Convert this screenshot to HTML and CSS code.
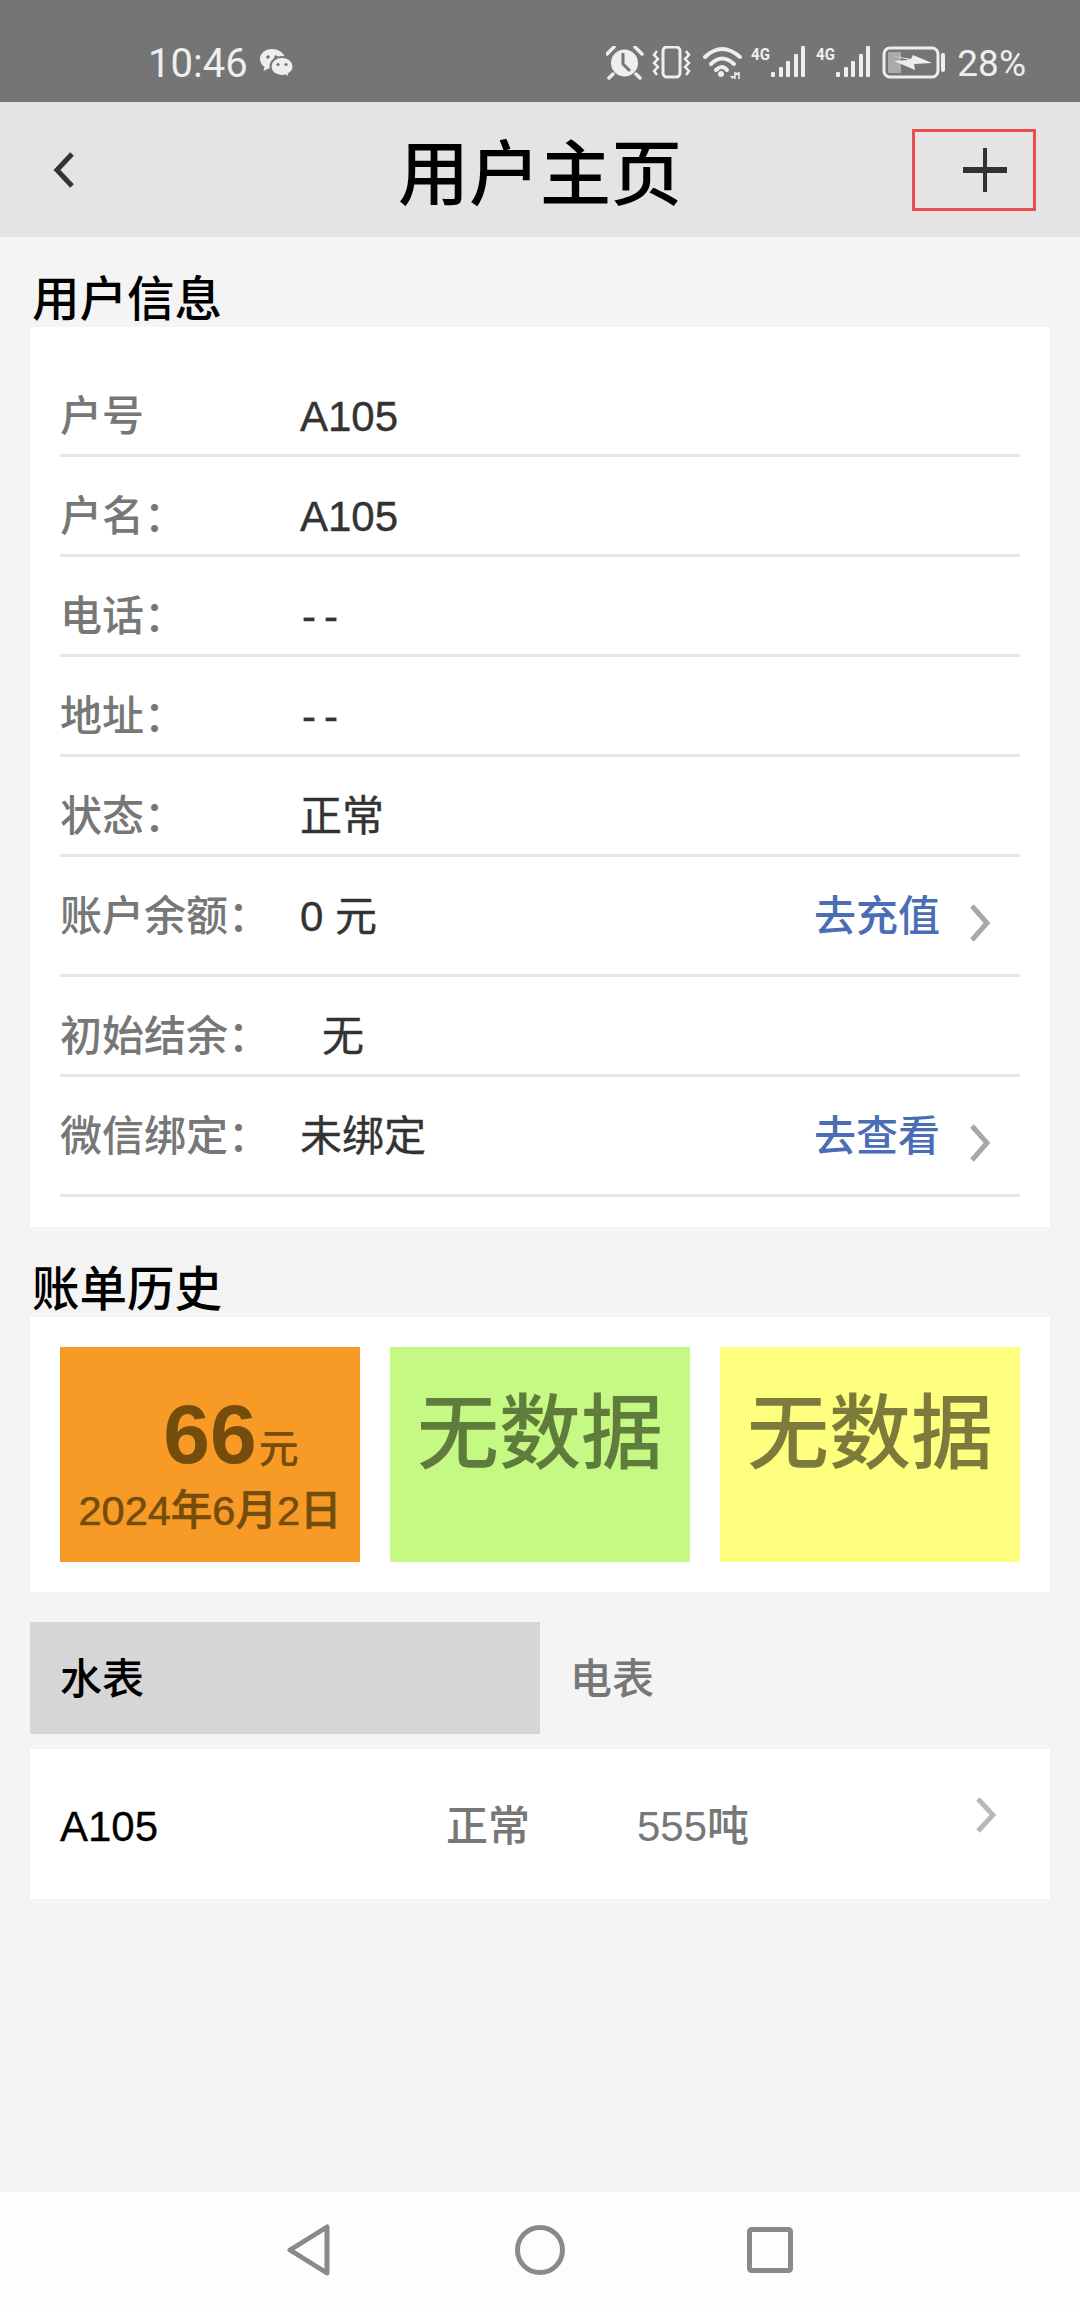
FILE: index.html

```html
<!DOCTYPE html>
<html lang="zh-CN">
<head>
    <meta charset="UTF-8">
    <meta name="viewport" content="width=device-width, initial-scale=1.0">
    <title>用户主页</title>
    <link rel="stylesheet" href="styles.css">
</head>
<body>
    <div class="statusbar">
        <span class="time">10:46</span>
        <svg class="wechat" width="36" height="30" viewBox="0 0 36 30">
            <path d="M13 1C6 1 1 5.500 1 11c0 3.500 2 6 4.500 8l-1 4 5-2.500c1.500.5 3 .5 4.500.5 7 0 12-4.500 12-10S20 1 13 1z" fill="#eee"/>
            <circle cx="9" cy="9" r="1.800" fill="#757575"/>
            <circle cx="17" cy="9" r="1.800" fill="#757575"/>
            <path d="M23 9c-6.500 0-11.500 4-11.500 9.500S16.500 28 23 28c1.300 0 2.500-.2 3.500-.5l4 2.300-.8-3.800c2.800-1.700 4.800-4.500 4.800-7.500C34.500 13 29.500 9 23 9z" fill="#eee" stroke="#757575" stroke-width="2"/>
            <circle cx="19" cy="16.500" r="1.600" fill="#757575"/>
            <circle cx="27" cy="16.500" r="1.600" fill="#757575"/>
        </svg>
        <svg class="status-icons" width="340" height="34" viewBox="0 0 340 34">
            <!-- alarm -->
            <circle cx="18.500" cy="17" r="13.500" fill="#eee"/>
            <path d="M17 7v11l7 7" fill="none" stroke="#757575" stroke-width="3"/>
            <path d="M1 8l7-7M29 1l7 7M7 28l-4 4M30 28l4 4" stroke="#eee" stroke-width="3.500" stroke-linecap="round"/>
            <!-- vibrate -->
            <rect x="57" y="1" width="17" height="30" rx="4" fill="none" stroke="#eee" stroke-width="3"/>
            <path d="M51 5l-3 4 4 4-4 4 4 4-4 4 3 4M80 5l3 4-4 4 4 4-4 4 4 4-3 4" fill="none" stroke="#eee" stroke-width="2.500"/>
            <!-- wifi -->
            <g fill="none" stroke="#eee" stroke-width="4" stroke-linecap="round">
                <path d="M99 11Q116-5 134 11"/>
                <path d="M105 18Q116 7 128 18"/>
                <path d="M110 24Q116 18 121 24"/>
            </g>
            <circle cx="115" cy="28" r="3" fill="#eee"/>
            <path d="M124 30h5l-2.500 3zM131 26l2.500 3h-5z" fill="#eee"/>
            <path d="M129 26v7M133 26v7" stroke="#eee" stroke-width="1.500"/>
            <!-- signal -->
            <g fill="#eee" class="signal-label">
                <text x="145" y="14" textLength="19" lengthAdjust="spacingAndGlyphs">4G</text>
                <text x="210" y="14" textLength="19" lengthAdjust="spacingAndGlyphs">4G</text>
            </g>
            <g fill="#eee">
                <rect x="165" y="26" width="4" height="5" rx="1"/>
                <rect x="173" y="21" width="4" height="10" rx="1"/>
                <rect x="180" y="15" width="4" height="16" rx="1"/>
                <rect x="188" y="8" width="4" height="23" rx="1"/>
                <rect x="195" y="0" width="4" height="31" rx="1"/>
                <rect x="230" y="26" width="4" height="5" rx="1"/>
                <rect x="238" y="21" width="4" height="10" rx="1"/>
                <rect x="245" y="15" width="4" height="16" rx="1"/>
                <rect x="253" y="8" width="4" height="23" rx="1"/>
                <rect x="260" y="0" width="4" height="31" rx="1"/>
            </g>
            <!-- battery -->
            <rect x="278" y="2" width="54" height="29" rx="6" fill="none" stroke="#eee" stroke-width="3"/>
            <rect x="282" y="6" width="13" height="21" rx="1" fill="#aaa"/>
            <path d="M288 10l17 3 2-4 19 8-18 1 1 6-21-9 15-1z" fill="#eee"/>
            <rect x="335" y="7" width="4" height="19" rx="2" fill="#eee"/>
        </svg>
        <span class="battery-pct">28%</span>
    </div>

    <header class="topbar">
        <div class="topbar-side">
            <svg class="back" width="24" height="38" viewBox="0 0 24 38">
                <path d="M20 3L5 19l15 16" fill="none" stroke="#333" stroke-width="5"/>
            </svg>
        </div>
        <h1>用户主页</h1>
        <div class="topbar-side topbar-right">
            <div class="add-box">
                <svg width="44" height="44" viewBox="0 0 44 44">
                    <path d="M0 22h44" stroke="#333" stroke-width="6"/>
                    <path d="M22 0v44" stroke="#333" stroke-width="4"/>
                </svg>
            </div>
        </div>
    </header>

    <main class="content">
        <h2>用户信息</h2>
        <section class="card info-card">
            <div class="row"><span class="label">户号</span><span class="value">A105</span></div>
            <div class="row"><span class="label">户名：</span><span class="value">A105</span></div>
            <div class="row"><span class="label">电话：</span><span class="value dashes">--</span></div>
            <div class="row"><span class="label">地址：</span><span class="value dashes">--</span></div>
            <div class="row"><span class="label">状态：</span><span class="value">正常</span></div>
            <div class="row row-tall">
                <span class="label">账户余额：</span><span class="value">0 元</span>
                <a class="link">去充值</a>
                <svg class="chevron" width="24" height="40" viewBox="0 0 24 40"><path d="M4 3l15 17L4 37" fill="none" stroke="#a8a8a8" stroke-width="5"/></svg>
            </div>
            <div class="row"><span class="label">初始结余：</span><span class="value indent">无</span></div>
            <div class="row row-tall">
                <span class="label">微信绑定：</span><span class="value">未绑定</span>
                <a class="link">去查看</a>
                <svg class="chevron" width="24" height="40" viewBox="0 0 24 40"><path d="M4 3l15 17L4 37" fill="none" stroke="#a8a8a8" stroke-width="5"/></svg>
            </div>
        </section>

        <h2>账单历史</h2>
        <section class="card bills">
            <div class="bill bill-orange">
                <div class="bill-amount">66<span class="bill-unit">元</span></div>
                <div class="bill-date">2024年6月2日</div>
            </div>
            <div class="bill bill-green"><div class="bill-empty">无数据</div></div>
            <div class="bill bill-yellow"><div class="bill-empty">无数据</div></div>
        </section>

        <div class="tabs">
            <div class="tab active">水表</div>
            <div class="tab">电表</div>
        </div>

        <section class="card meter">
            <span class="meter-name">A105</span>
            <span class="meter-state">正常</span>
            <span class="meter-usage">555吨</span>
            <svg class="meter-chevron" width="24" height="38" viewBox="0 0 24 38"><path d="M4 3l15 16L4 35" fill="none" stroke="#b8b8b8" stroke-width="5"/></svg>
        </section>
    </main>

    <nav class="navbar">
        <svg width="46" height="52" viewBox="0 0 46 52">
            <path d="M3 26L40 3v46z" fill="none" stroke="#8a8a8a" stroke-width="5" stroke-linejoin="round"/>
        </svg>
        <svg width="50" height="50" viewBox="0 0 50 50">
            <circle cx="25" cy="25" r="22.500" fill="none" stroke="#8a8a8a" stroke-width="5"/>
        </svg>
        <svg width="46" height="46" viewBox="0 0 46 46">
            <rect x="2.500" y="2.500" width="41" height="41" rx="2" fill="none" stroke="#8a8a8a" stroke-width="5"/>
        </svg>
    </nav>
</body>
</html>
```

FILE: styles.css

```css
* {
    box-sizing: border-box;
}
body {
    margin: 0;
    width: 1080px;
    height: 2310px;
    display: flex;
    flex-direction: column;
    overflow: hidden;
    font-family: "Liberation Sans", "Noto Sans CJK SC", sans-serif;
    font-size: 42px;
    font-weight: 500;
    background-color: #f4f4f4;
    color: #333;
}

/* status bar */
.statusbar {
    height: 102px;
    flex: none;
    display: flex;
    align-items: center;
    padding: 24px 54px 0 148px;
    background-color: #757575;
    color: #eee;
    font-family: Roboto, sans-serif;
    font-size: 40px;
    font-weight: 400;
}
.wechat {
    margin-left: 11px;
}
.status-icons {
    margin-left: auto;
}
.signal-label {
    font-family: Roboto, sans-serif;
    font-size: 16px;
    font-weight: bold;
}
.battery-pct {
    margin-left: 11px;
    font-size: 37px;
}

/* title bar */
.topbar {
    height: 135px;
    flex: none;
    display: grid;
    grid-template-columns: 1fr auto 1fr;
    align-items: center;
    background-color: #e4e4e4;
}
.topbar h1 {
    margin: 0;
    font-size: 71px;
    font-weight: 500;
    color: #000;
    line-height: 80px;
    padding-top: 10px;
}
.topbar-side {
    display: flex;
    padding-left: 52px;
}
.topbar-right {
    justify-content: flex-end;
    padding: 0 44px 0 0;
}
.add-box {
    width: 124px;
    height: 82px;
    margin-top: 1px;
    border: 3px solid #ee4b4f;
    display: flex;
    align-items: center;
    justify-content: center;
    padding-left: 22px;
}

/* content */
.content {
    flex: 1;
    padding: 0 30px;
}
.content h2 {
    margin: 0;
    height: 90px;
    padding: 40px 0 0 2px;
    font-size: 47.500px;
    line-height: 46px;
    font-weight: 500;
    color: #000;
}
.card {
    background-color: #fff;
}
.info-card {
    padding: 30px 30px 30px;
}
.row {
    height: 100px;
    padding-top: 30px;
    line-height: 60px;
    display: flex;
    align-items: flex-start;
    border-bottom: 3px solid #e6e6e6;
}
.row-tall {
    height: 120px;
}
.label {
    width: 240px;
    flex: none;
    color: #777;
}
.value {
    color: #333;
    font-weight: 400;
    -webkit-text-stroke: 0.4px #333;
}
.dashes {
    letter-spacing: 8px;
    padding-left: 2px;
}
.indent {
    padding-left: 22px;
}
.link {
    margin-left: auto;
    color: #4a6db5;
}
.chevron {
    margin: 16px 28px 0 28px;
    filter: blur(0.7px);
}

/* bills */
.bills {
    display: grid;
    grid-template-columns: repeat(3, 300px);
    gap: 30px;
    padding: 30px;
    height: 275px;
}
.bill {
    height: 215px;
    text-align: center;
}
.bill-orange {
    background-color: #f89b26;
    color: #744c0b;
}
.bill-green {
    background-color: #c5f983;
    color: #5f7c3c;
}
.bill-yellow {
    background-color: #ffff7f;
    color: #7d7b3b;
}
.bill-amount {
    font-size: 84px;
    font-weight: bold;
    line-height: 80px;
    padding: 47px 0 0 42px;
}
.bill-unit {
    font-size: 40px;
    font-weight: 500;
    margin-left: 2px;
}
.bill-date {
    font-size: 41.500px;
    line-height: 50px;
    margin-top: -3px;
    -webkit-text-stroke: 0.6px #744c0b;
}
.bill-empty {
    font-size: 82px;
    line-height: 90px;
    padding-top: 42px;
}

/* tabs */
.tabs {
    display: flex;
    margin-top: 30px;
}
.tab {
    width: 510px;
    height: 112px;
    line-height: 116px;
    padding-left: 30px;
    color: #777;
}
.tab.active {
    background-color: #d6d6d6;
    color: #000;
}

/* meter list */
.meter {
    margin-top: 15px;
    height: 150px;
    padding-left: 30px;
    display: grid;
    grid-template-columns: 386px 191px 1fr auto;
    align-items: center;
    line-height: 156px;
}
.meter-name {
    color: #000;
    -webkit-text-stroke: 0.3px #000;
}
.meter-state,
.meter-usage {
    color: #777;
}
.meter-chevron {
    margin: 0 52px 24px 0;
    filter: blur(0.7px);
}

/* android nav */
.navbar {
    height: 118px;
    flex: none;
    display: grid;
    grid-template-columns: 46px 50px 46px;
    justify-content: center;
    align-items: center;
    column-gap: 182px;
    padding-bottom: 2px;
    background-color: #fdfdfd;
}
```
